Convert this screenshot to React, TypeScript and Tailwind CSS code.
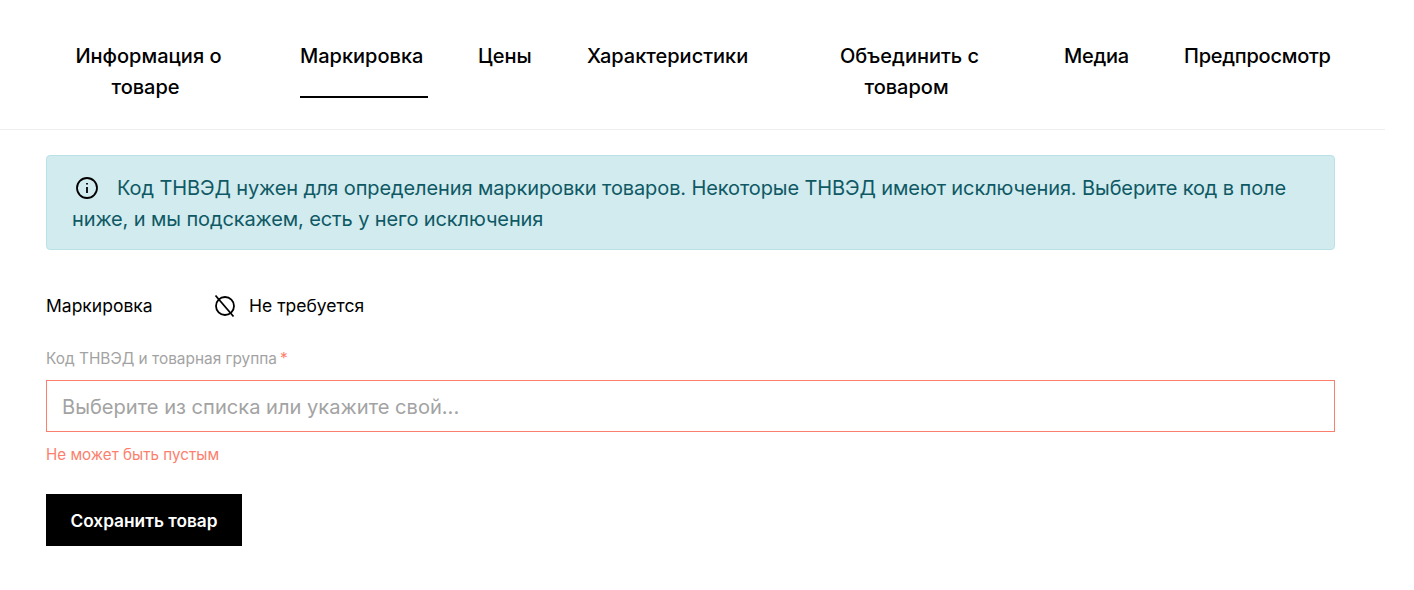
const tabs = [
  { first: 'Информация о', rest: 'товаре', width: 'w-[199px]', center: true },
  { first: 'Маркировка', width: 'w-[123px]', active: true },
  { first: 'Цены', width: 'w-[54px]' },
  { first: 'Характеристики', width: 'w-[162px]' },
  { first: 'Объединить с', rest: 'товаром', width: 'w-[205px]', center: true },
  { first: 'Медиа', width: 'w-[65px] tracking-[-0.3px]' },
  { first: 'Предпросмотр', width: 'w-[147px] tracking-[-0.25px]' },
];

function InfoIcon() {
  return (
    <svg className="inline-block align-[-5px]" width="24" height="24" viewBox="0 0 24 24" fill="none" stroke="black" strokeWidth="1.8">
      <circle cx="12" cy="12" r="10" />
      <path d="M12 11v6" />
      <path d="M12 7v1.6" />
    </svg>
  );
}

function NoneIcon() {
  return (
    <svg width="24" height="24" viewBox="0 0 24 24" fill="none" stroke="black" strokeWidth="1.8">
      <circle cx="12" cy="12" r="9" />
      <path d="M2.5 1.5l18 21" />
    </svg>
  );
}

export default function App() {
  return (
    <div className="w-[1385px] min-h-[590px] bg-white text-black font-['Inter',sans-serif]">
      {/* tabs */}
      <div className="h-[130px] border-b border-[#eeeeee] pt-[41px] pl-[46px]">
        <div className="flex gap-[55px] text-[20px] font-medium leading-[31px]">
          {tabs.map((t) => (
            <div key={t.first} className={`${t.width} ${t.center ? 'text-center' : 'text-left whitespace-nowrap'} h-[56px]`}>
              {t.center ? <span className="pl-[6px]">{t.first}</span> : t.first}
              {t.rest && <div>{t.rest}</div>}
              {t.active && <div className="mt-[24px] h-[2px] w-[128px] bg-black" />}
            </div>
          ))}
        </div>
      </div>

      <div className="w-[1289px] ml-[46px]">
        <div className="mt-[25px] h-[95px] rounded border border-[#b9e2e7] bg-[#d1ebef] pl-[25px] pr-[25px] pt-[17px] text-[20px] leading-[31px] tracking-[-0.11px] text-[#0f5964]">
          <span className="mr-[18px] ml-[3px]"><InfoIcon /></span>
          Код ТНВЭД нужен для определения маркировки товаров. Некоторые ТНВЭД имеют исключения. Выберите код в поле ниже, и мы подскажем, есть у него исключения
        </div>

        <div className="mt-[44px] flex h-[24px] items-center text-[17.5px]">
          <div className="w-[167px]">Маркировка</div>
          <NoneIcon />
          <div className="ml-[12px]">Не требуется</div>
        </div>

        <div className="mt-[31px] text-[15.4px] leading-[20px] text-[#a3a3a3]">
          Код ТНВЭД и товарная группа<span className="ml-[3px] text-[#fc7f6e]">*</span>
        </div>
        <div className="mt-[11px] flex h-[52px] items-center border border-[#fc7f6e] pl-[15px] pt-[2px] text-[20.1px] text-[#a3a3a3]">
          Выберите из списка или укажите свой...
        </div>
        <div className="mt-[13px] text-[15.2px] leading-[20px] text-[#fc7f6e]">Не может быть пустым</div>

        <button className="mt-[29px] flex h-[52px] w-[196px] items-center justify-center bg-black pt-[1px] text-[17.3px] font-semibold text-white">
          Сохранить товар
        </button>
      </div>
    </div>
  );
}
